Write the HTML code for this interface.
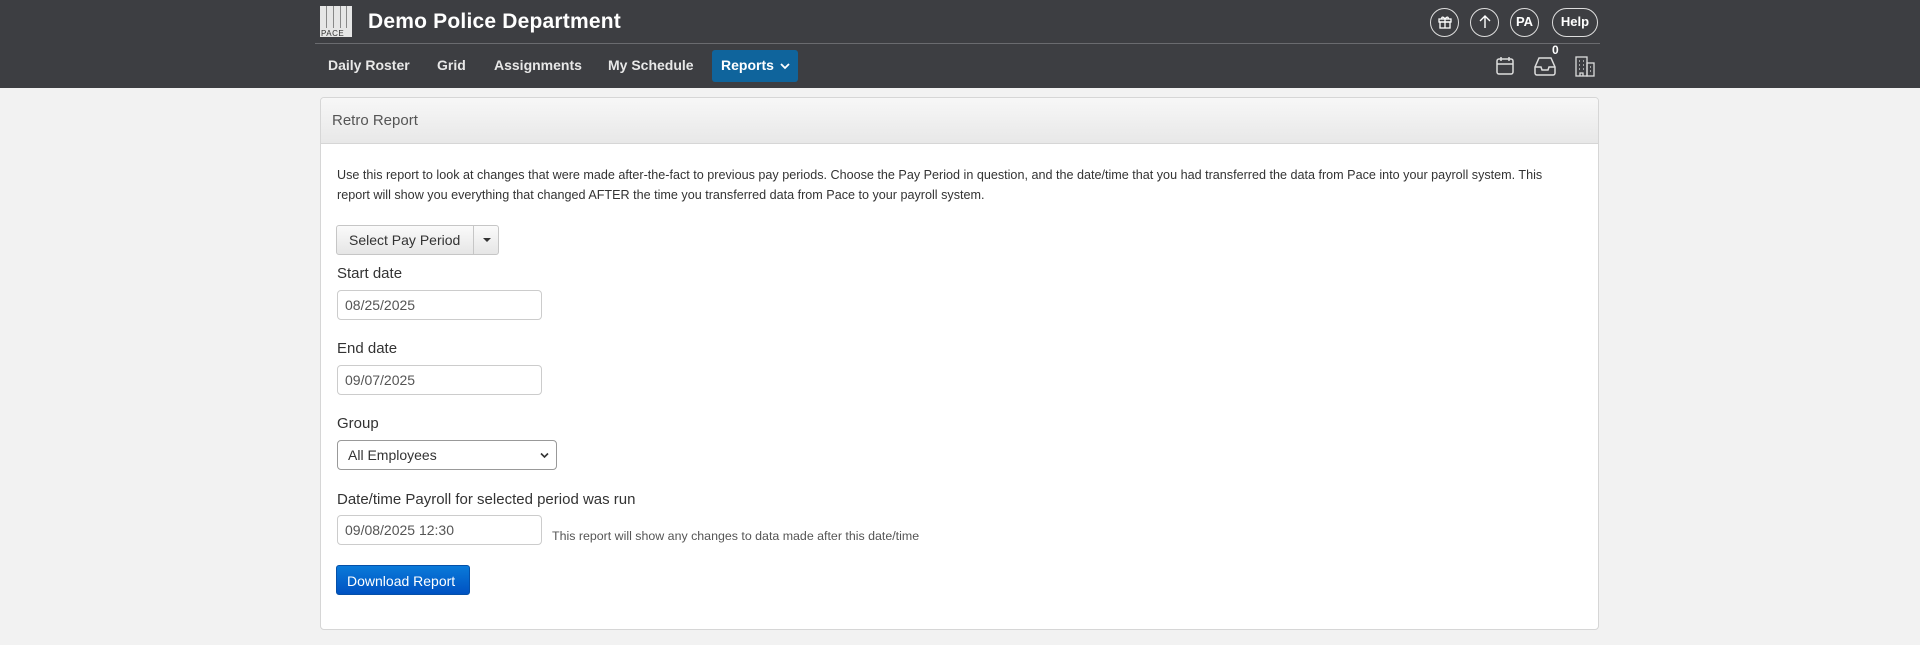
<!DOCTYPE html>
<html><head><meta charset="utf-8"><style>
*{box-sizing:border-box;margin:0;padding:0}
body{width:1920px;height:645px;overflow:hidden;background:#f2f2f2;font-family:"Liberation Sans",sans-serif;position:relative}
.hdr{position:absolute;left:0;top:0;width:1920px;height:88px;background:#3d3e42}
.abs{position:absolute}
.title{left:368px;top:10px;color:#fff;font-size:21px;font-weight:bold;letter-spacing:0.2px}
.div{left:315px;top:43px;width:1285px;height:1px;background:#6a6b6f}
.nav{top:57px;color:#e8e8e8;font-size:14px;font-weight:bold}
.rep{left:712px;top:50px;width:86px;height:32px;background:#0f649c;border-radius:3px;color:#fff;font-size:14px;font-weight:bold;padding:7px 7px 7px 9px;white-space:nowrap}
.circ{top:8px;width:29px;height:29px;border:1.5px solid #ddd;border-radius:15px;color:#fff;font-size:13px;font-weight:bold;text-align:center;line-height:26px}
.panel{left:320px;top:97px;width:1279px;height:533px;background:#fff;border:1px solid #d6d6d6;border-radius:4px;overflow:hidden}
.ph{height:46px;background:linear-gradient(#f7f7f7,#e8e8e8);border-bottom:1px solid #d6d6d6;padding:14px 11px;font-size:15px;color:#555}
.desc{left:16px;top:67px;width:1250px;font-size:12.6px;line-height:20px;color:#333}
.lbl{left:16px;font-size:15px;color:#333}
.inp{left:16px;width:205px;height:30px;border:1px solid #ccc;border-radius:4px;padding:6px 7px;font-size:14px;color:#555}
</style></head><body>
<div class="hdr">
<svg class="abs" style="left:320px;top:6px" width="32" height="31" viewBox="0 0 32 31"><rect width="32" height="31" fill="#e6e6e6"/><g fill="#888"><rect x="6" y="0" width="1" height="22"/><rect x="13" y="0" width="1" height="22"/><rect x="20" y="0" width="1" height="22"/><rect x="26" y="0" width="1" height="22"/></g><text x="1" y="30" font-size="8" font-family="Liberation Sans" fill="#333" letter-spacing="0.5">PACE</text></svg>
<div class="abs title">Demo Police Department</div>
<div class="abs div"></div>
<div class="abs nav" style="left:328px">Daily Roster</div>
<div class="abs nav" style="left:437px">Grid</div>
<div class="abs nav" style="left:494px">Assignments</div>
<div class="abs nav" style="left:608px">My Schedule</div>
<div class="abs rep">Reports <svg width="10" height="8" viewBox="0 0 10 8" fill="none" stroke="#fff" stroke-width="1.8" style="margin-left:2px"><path d="M1 2l4 4 4-4"/></svg></div>
<div class="abs circ" style="left:1430px"><svg width="14" height="14" viewBox="0 0 14 14" style="margin-top:6px" fill="none" stroke="#fff" stroke-width="1.3"><rect x="1" y="4" width="12" height="3"/><rect x="2" y="7" width="10" height="6"/><path d="M7 4v9M7 4C5 1 3 2 4 4M7 4c2-3 4-2 3 0"/></svg></div>
<div class="abs circ" style="left:1470px"><svg width="14" height="14" viewBox="0 0 14 14" style="margin-top:6px" fill="none" stroke="#fff" stroke-width="1.4"><path d="M7 13V1M2 6l5-5 5 5"/></svg></div>
<div class="abs circ" style="left:1510px">PA</div>
<div class="abs circ" style="left:1552px;width:46px">Help</div>
<svg class="abs" style="left:1495px;top:56px" width="20" height="20" viewBox="0 0 20 20" fill="none" stroke="#ddd" stroke-width="1.5"><rect x="2" y="3" width="16" height="15" rx="2"/><path d="M2 8h16M6 1v4M14 1v4"/></svg>
<svg class="abs" style="left:1534px;top:56px" width="22" height="20" viewBox="0 0 22 20" fill="none" stroke="#ddd" stroke-width="1.5"><path d="M1 11l4-9h12l4 9v6a2 2 0 0 1-2 2H3a2 2 0 0 1-2-2z"/><path d="M1 11h6l1 3h6l1-3h6"/></svg>
<div class="abs" style="left:1552px;top:43px;color:#fff;font-size:12px;font-weight:bold">0</div>
<svg class="abs" style="left:1574px;top:55px" width="22" height="22" viewBox="0 0 22 22" fill="none" stroke="#ddd" stroke-width="1.3"><rect x="2" y="2" width="11" height="19"/><rect x="13" y="8" width="7" height="13"/><path d="M5 6h1M9 6h1M5 10h1M9 10h1M5 14h1M9 14h1M16 12h1M16 16h1M6 21v-3h3v3"/></svg>
</div>
<div class="abs panel">
<div class="ph">Retro Report</div>
<div class="abs desc">Use this report to look at changes that were made after-the-fact to previous pay periods. Choose the Pay Period in question, and the date/time that you had transferred the data from Pace into your payroll system. This<br>report will show you everything that changed AFTER the time you transferred data from Pace to your payroll system.</div>
<div class="abs" style="left:15px;top:127px;width:163px;height:30px;border:1px solid #c6c6c6;border-radius:3px;background:linear-gradient(#fafafa,#e6e6e6);font-size:14px;color:#333">
<span style="position:absolute;left:12px;top:6px">Select Pay Period</span>
<span style="position:absolute;left:136px;top:0;width:1px;height:28px;background:#c6c6c6"></span>
<span style="position:absolute;left:146px;top:12px;border:4px solid transparent;border-top:4px solid #333;border-bottom:0"></span></div>
<div class="abs lbl" style="top:167px">Start date</div>
<div class="abs inp" style="top:192px">08/25/2025</div>
<div class="abs lbl" style="top:242px">End date</div>
<div class="abs inp" style="top:267px">09/07/2025</div>
<div class="abs lbl" style="top:317px">Group</div>
<div class="abs inp" style="top:342px;width:220px;border-color:#999;color:#333;padding-left:10px">All Employees<svg style="position:absolute;right:7px;top:11px" width="9" height="7" viewBox="0 0 9 7" fill="none" stroke="#333" stroke-width="1.6"><path d="M1 1.5l3.5 3.5 3.5-3.5"/></svg></div>
<div class="abs lbl" style="top:393px">Date/time Payroll for selected period was run</div>
<div class="abs inp" style="top:417px">09/08/2025 12:30</div>
<div class="abs" style="left:231px;top:431px;font-size:12.4px;color:#555">This report will show any changes to data made after this date/time</div>
<div class="abs" style="left:15px;top:467px;width:134px;height:30px;border:1px solid #0550a8;border-radius:3px;background:linear-gradient(#0a7ad9,#0052c2);color:#fff;font-size:14px;padding:7px 10px">Download Report</div>
</div>
</body></html>
